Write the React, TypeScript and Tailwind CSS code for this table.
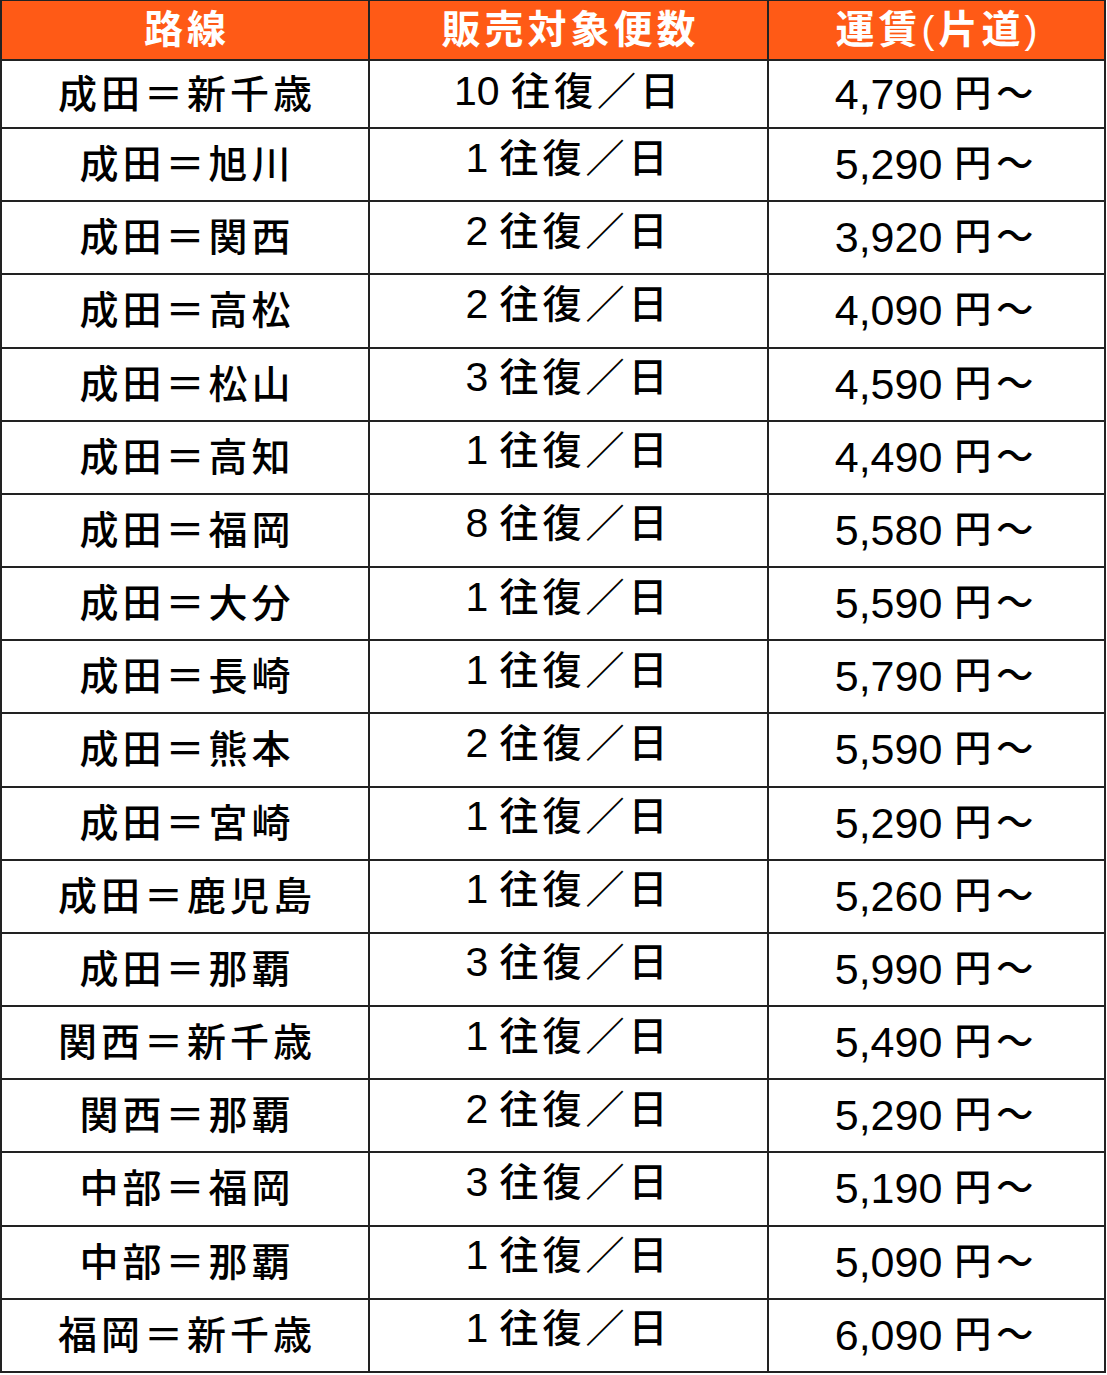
import React from "react";

const rows: [string, string, string][] = [
  ["成田＝新千歳", "10", "4,790"],
  ["成田＝旭川", "1", "5,290"],
  ["成田＝関西", "2", "3,920"],
  ["成田＝高松", "2", "4,090"],
  ["成田＝松山", "3", "4,590"],
  ["成田＝高知", "1", "4,490"],
  ["成田＝福岡", "8", "5,580"],
  ["成田＝大分", "1", "5,590"],
  ["成田＝長崎", "1", "5,790"],
  ["成田＝熊本", "2", "5,590"],
  ["成田＝宮崎", "1", "5,290"],
  ["成田＝鹿児島", "1", "5,260"],
  ["成田＝那覇", "3", "5,990"],
  ["関西＝新千歳", "1", "5,490"],
  ["関西＝那覇", "2", "5,290"],
  ["中部＝福岡", "3", "5,190"],
  ["中部＝那覇", "1", "5,090"],
  ["福岡＝新千歳", "1", "6,090"],
];

export default function App() {
  return (
    <div className="bg-white w-[1107px] min-h-[1375px] font-['Liberation_Sans','Noto_Sans_CJK_JP',sans-serif] text-black">
      <div className="w-[1106px] border-x-2 border-t border-[#222]">
        <div className="grid grid-cols-[368px_399px_335px] h-[60px] border-b-2 border-[#222] bg-[#ff5a16] text-white font-bold text-[39px] leading-none">
          <div className="flex items-center justify-center border-r-2 border-[#222] tracking-[4px] pl-[4px] pb-[2px]">路線</div>
          <div className="flex items-center justify-center border-r-2 border-[#222] tracking-[4px] pl-[4px] pb-[2px]">販売対象便数</div>
          <div className="flex items-center justify-center pb-[2px]">
            <span className="tracking-[4px]">運賃</span>
            <span className="font-normal">(</span>
            <span className="tracking-[4px] pl-[4px]">片道</span>
            <span className="font-normal">)</span>
          </div>
        </div>
        {rows.map(([route, num, fare], i) => (
          <div
            key={i}
            className={`grid grid-cols-[368px_399px_335px] border-b-2 border-[#222] leading-none ${i === 0 ? "h-[68px]" : "h-[73.18px]"}`}
          >
            <div className="flex items-center justify-center border-r-2 border-[#222] text-[39px] font-medium tracking-[4px] pl-[4px]">
              {route}
            </div>
            <div className={`flex items-center justify-center border-r-2 border-[#222] ${i === 0 ? "pb-[6px]" : "pb-[13px]"}`}>
              <span className="text-[41px]">{num}</span>
              <span className="text-[41px]">&nbsp;</span>
              <span className="text-[39px] font-medium tracking-[4px]">往復／日</span>
            </div>
            <div className="flex items-center justify-center">
              <span className="text-[43px]">{fare}</span>
              <span className="text-[43px]">&nbsp;</span>
              <span className="text-[37px] font-medium tracking-[5px]">円〜</span>
            </div>
          </div>
        ))}
      </div>
    </div>
  );
}
